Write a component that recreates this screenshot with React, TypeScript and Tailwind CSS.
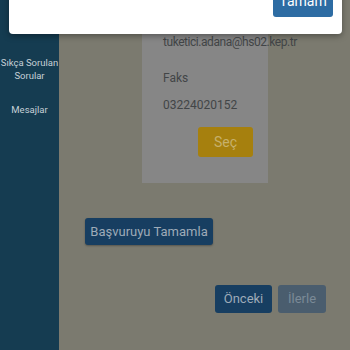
export default function App() {
  return (
    <div
      className="relative flex w-[350px] h-[350px] overflow-hidden bg-[#7b7a6f]"
      style={{ fontFamily: 'Roboto, "Noto Sans", sans-serif' }}
    >
      <aside className="w-[59px] shrink-0 bg-[#153c51] flex flex-col items-center pt-[56px] text-[9.5px] leading-[13px] text-[#c5d0d6] text-center">
        <div className="whitespace-nowrap">Sıkça Sorulan<br />Sorular</div>
        <div className="mt-[21px] whitespace-nowrap">Mesajlar</div>
      </aside>
      <main className="flex-1 flex flex-col">
        <div className="ml-[83px] w-[126px] h-[183px] bg-[#868686] pl-[21px] pt-[34px] text-[12px] leading-[16px] tracking-[-0.45px] text-[#424547] flex flex-col">
          <div className="whitespace-nowrap">tuketici.adana@hs02.kep.tr</div>
          <div className="mt-[20px] tracking-normal">Faks</div>
          <div className="mt-[11px] tracking-normal">03224020152</div>
          <button className="mt-[14px] ml-[35px] w-[55px] h-[30px] rounded-[3px] bg-[#a6800e] text-[#c6b06b] text-[14px] tracking-normal">
            Seç
          </button>
        </div>
        <button className="mt-[35px] ml-[26px] w-[128px] h-[27px] rounded-[3px] bg-[#173e61] text-[#9eabb8] text-[13px] shadow-[0_1px_2px_rgba(0,0,0,0.3)]">
          Başvuruyu Tamamla
        </button>
        <div className="mt-[40px] mr-[24px] flex justify-end gap-[6px]">
          <button className="w-[57px] h-[28px] rounded-[3px] bg-[#173e61] text-[#9eabb8] text-[13px]">
            Önceki
          </button>
          <button className="w-[48px] h-[28px] rounded-[3px] bg-[#4a5d6e] text-[#7b8a97] text-[13px]">
            İlerle
          </button>
        </div>
      </main>
      <div className="absolute left-[9px] top-[-10px] w-[333px] h-[44px] bg-white rounded-b-[4px] shadow-[0_2px_6px_rgba(0,0,0,0.35)]">
        <button className="absolute right-[9px] bottom-[17px] w-[60px] h-[30px] rounded-[3px] bg-[#2d6ca3] text-white text-[14px] flex items-end justify-center pb-[5px]">
          Tamam
        </button>
      </div>
    </div>
  );
}
